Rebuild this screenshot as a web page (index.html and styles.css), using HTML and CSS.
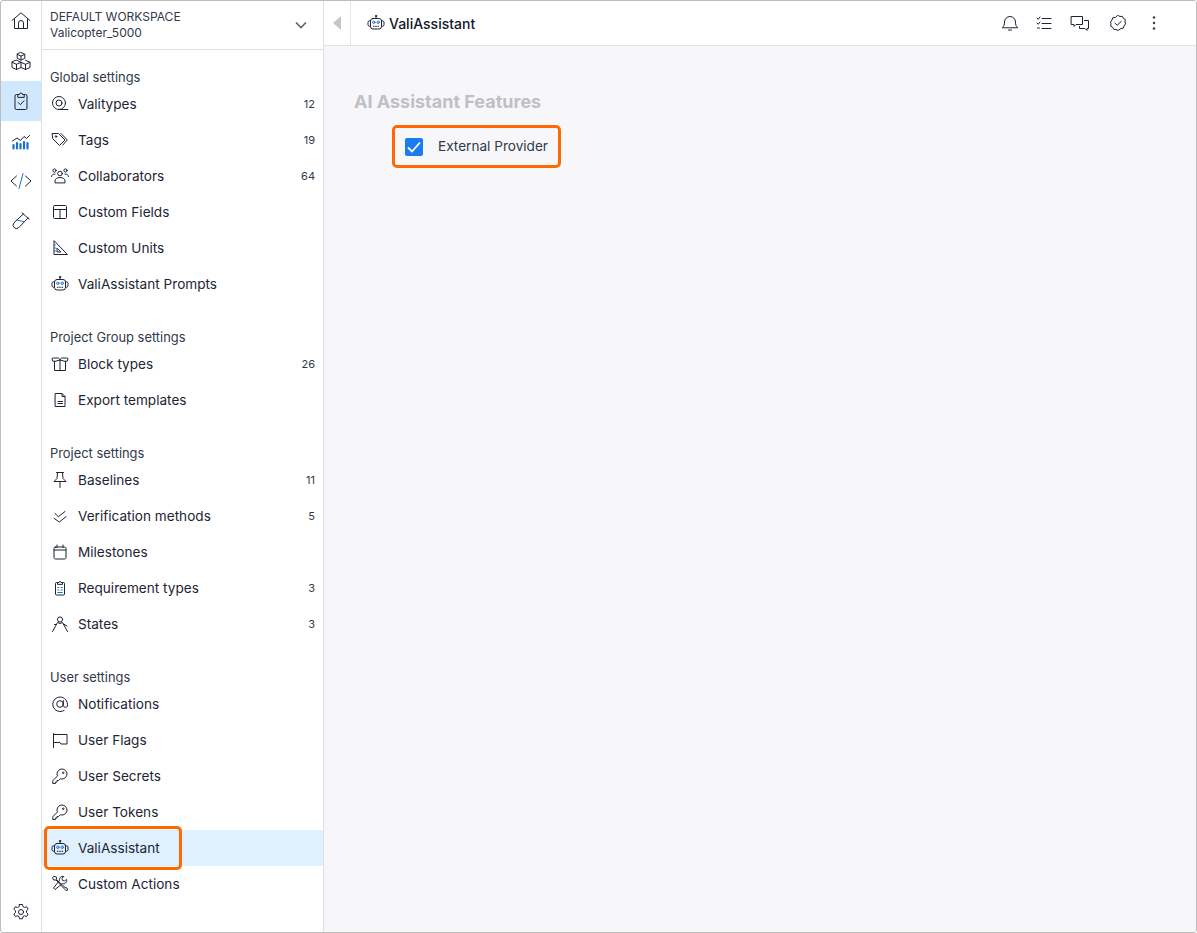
FILE: index.html
```html
<!DOCTYPE html>
<html lang="en">
<head>
<meta charset="utf-8">
<title>ValiAssistant settings</title>
<link rel="stylesheet" href="styles.css">
</head>
<body>
<svg class="defs" width="0" height="0" aria-hidden="true">
  <defs>
    <symbol id="robot" viewBox="0 0 18 18"><g fill="none" stroke="currentColor" stroke-width="1" stroke-linecap="round" stroke-linejoin="round"><rect x="3.500" y="4.500" width="11" height="10.500" rx="2.500"/><path d="M9 4.500V2.800"/><circle cx="9" cy="2" r=".7"/><path d="M3.500 6.800h-1A1.500 1.500 0 0 0 1 8.300v2.400a1.500 1.500 0 0 0 1.500 1.500h1M14.500 6.800h1A1.500 1.500 0 0 1 17 8.300v2.400a1.500 1.500 0 0 1-1.500 1.500h-1"/><circle cx="6.800" cy="8.300" r="1.200" stroke="#1c6fd0"/><circle cx="11.200" cy="8.300" r="1.200" stroke="#1c6fd0"/><path d="M6.300 12.300h.8M8.600 12.300h.8M10.900 12.300h.8"/></g></symbol>
    <symbol id="key" viewBox="0 0 16 16"><g fill="none" stroke="currentColor" stroke-width="1" stroke-linejoin="round"><path d="M10 1a5 5 0 0 1 0 10q-.8 0-1.600-.3L6.600 12.500H5v1.600H3.400v1.400H.8v-2.800l4.700-4.800Q5 7.100 5 6a5 5 0 0 1 5-5z"/><circle cx="11.200" cy="4.800" r=".8"/></g></symbol>
  </defs>
</svg>
<div class="window">
  <nav class="rail">
    <a class="rail-btn"><svg class="ic20" viewBox="0 0 20 20"><path d="M1 9.500 10 1.800l9 7.700M3.500 8v9.500h13V8M7.500 17.500v-5.500a2.500 2.500 0 0 1 5 0v5.500"/></svg></a>
    <a class="rail-btn"><svg class="ic20" viewBox="0 0 20 20"><path d="M10 1.500l3.800 1.800v4L10 9.100 6.200 7.300v-4zM6.200 3.300 10 5.100l3.800-1.800M10 5.100v4M5.500 9.200l4.500 2.100v5.200l-4.500 2L1 16.500v-5.200zM1 11.300l4.500 2 4.500-2M5.500 13.300v5.200M14.500 9.200l4.500 2.100v5.200l-4.500 2-4.500-2M10 11.300l4.500 2 4.500-2M14.500 13.300v5.200"/></svg></a>
    <a class="rail-btn rail-on"><svg class="ic20" viewBox="0 0 20 20"><path d="M6.800 3.500H5.500a1.500 1.500 0 0 0-1.500 1.500v12a1.500 1.500 0 0 0 1.500 1.500h9a1.500 1.500 0 0 0 1.500-1.500V5a1.500 1.500 0 0 0-1.500-1.500h-1.300M6.800 6V3.500h1.700a1.500 1.500 0 0 1 3 0h1.700V6zM7.200 11.500l2.200 2.200 3.600-3.900"/></svg></a>
    <a class="rail-btn"><svg class="ic20" viewBox="0 0 20 20"><path d="M1.500 10l4.500-3 3.500 2.500L13 5.500l2.500 2L18.500 4.500"/><path class="blue" d="M2.500 14v3.500M6 12v5.500M9.500 13v4.500M13 11v6.500M16.500 12v5.500" stroke-width="2.200"/></svg></a>
    <a class="rail-btn"><svg class="ic20 big" viewBox="0 0 22 20"><path d="M6.500 5 1 10l5.500 5M15.500 5 21 10l-5.500 5"/><path class="blue" d="M13 2.500 9 17.500"/></svg></a>
    <a class="rail-btn"><svg class="ic20" viewBox="0 0 20 20"><path d="M11 1.800l7.200 6.400M12.300 3 3 11.800a3.400 3.400 0 0 0 4.700 4.900L17 7"/><path class="blue" d="M6 9l7 1.800"/></svg></a>
    <div class="rail-fill"></div>
    <a class="rail-btn"><svg class="ic18" viewBox="0 0 18 18"><path d="M7.500 1.500h3l.5 2.200 1.500.8 2.100-.8 1.500 2.600-1.600 1.500v1.700l1.600 1.500-1.500 2.600-2.100-.8-1.500.8-.5 2.200h-3l-.5-2.200-1.500-.8-2.100.8-1.500-2.600 1.600-1.500V7.800L1.900 6.300l1.500-2.600 2.100.8 1.500-.8z"/><circle cx="9" cy="9" r="2.500"/></svg></a>
  </nav>

  <aside class="side">
    <header class="ws">
      <div class="ws-text"><div>DEFAULT WORKSPACE</div><div>Valicopter_5000</div></div>
      <svg class="ws-chev" viewBox="0 0 12 8"><path d="M1 1.500 6 6.500l5-5"/></svg>
    </header>

    <section class="group">
      <h3 class="group-title">Global settings</h3>
      <a class="row"><svg class="ri" viewBox="0 0 18 18"><circle cx="8" cy="8" r="6.500"/><circle cx="8" cy="8" r="3"/><path d="M8 14.500h9"/></svg><span class="row-label">Valitypes</span><span class="count">12</span></a>
      <a class="row"><svg class="ri" viewBox="0 0 18 18"><path d="M1.500 2.500h6l6.500 6.500-5.500 5.500L2 8zM10 2.500l6.300 6.500-4.500 5"/><circle cx="5" cy="5.500" r=".8"/></svg><span class="row-label">Tags</span><span class="count">19</span></a>
      <a class="row"><svg class="ri" viewBox="0 0 18 18"><circle cx="9" cy="6.500" r="2.300"/><path d="M4 15.500v-1.500c0-2 2-3.500 5-3.500s5 1.500 5 3.500v1.500z"/><circle cx="3.500" cy="3.500" r="1.600"/><circle cx="14.500" cy="3.500" r="1.600"/><path d="M.5 9.500c0-1.500 1.300-2.500 3.500-2.500M17.500 9.500c0-1.500-1.300-2.500-3.500-2.500"/></svg><span class="row-label">Collaborators</span><span class="count">64</span></a>
      <a class="row"><svg class="ri" viewBox="0 0 18 18"><rect x="2.500" y="2.500" width="13" height="13" rx="1"/><path d="M2.500 6.500h13M9 6.500v9"/></svg><span class="row-label">Custom Fields</span></a>
      <a class="row"><svg class="ri" viewBox="0 0 18 18"><path d="M3 2v13.500h13zM6 9.500v3.500h3.500z"/><path class="blue" d="M3 6h1.500M3 9h1.500M3 12h1.500"/></svg><span class="row-label">Custom Units</span></a>
      <a class="row"><svg class="ri-svg" width="18" height="18"><use href="#robot"/></svg><span class="row-label">ValiAssistant Prompts</span></a>
    </section>

    <section class="group">
      <h3 class="group-title">Project Group settings</h3>
      <a class="row"><svg class="ri" viewBox="0 0 18 18"><path d="M3.500 6v9.500h11V6M9 5v10.500M9 5 3.500 6.500 1.500 6 1 3.500 2.500 3H7zM9 5l5.500 1.500 2-.5.500-2.500-1.500-.5H11z"/></svg><span class="row-label">Block types</span><span class="count">26</span></a>
      <a class="row"><svg class="ri" viewBox="0 0 18 18"><path d="M4.500 2.500H11l3 3v10H4.500zM11 2.500v3h3M7 10.500h4.500M7 12.500h4.500"/></svg><span class="row-label">Export templates</span></a>
    </section>

    <section class="group">
      <h3 class="group-title">Project settings</h3>
      <a class="row"><svg class="ri" viewBox="0 0 18 18"><path d="M5.500 1.500h7M6.500 1.500l-.5 6-3 3h12l-3-3-.5-6M9 10.500v6"/></svg><span class="row-label">Baselines</span><span class="count">11</span></a>
      <a class="row"><svg class="ri" viewBox="0 0 18 18"><path d="M4 6.500l3.300 3.200L14 4.500M3 11.300 8.300 15 15 9.600"/></svg><span class="row-label">Verification methods</span><span class="count">5</span></a>
      <a class="row"><svg class="ri" viewBox="0 0 18 18"><rect x="3" y="4" width="12" height="12" rx="1.500"/><path d="M3 7h12M6 2v2.500M12 2v2.500"/></svg><span class="row-label">Milestones</span></a>
      <a class="row"><svg class="ri" viewBox="0 0 18 18"><path d="M6.500 3.500h-1a1 1 0 0 0-1 1V15a1 1 0 0 0 1 1h7a1 1 0 0 0 1-1V4.500a1 1 0 0 0-1-1h-1M6.500 5V3.500h1.500a1 1 0 0 1 2 0h1.500V5z"/><path class="blue" d="M6.800 8.500h1M10 8.500h1.300M6.800 11h1M10 11h1.300M6.800 13.500h4.500"/></svg><span class="row-label">Requirement types</span><span class="count">3</span></a>
      <a class="row"><svg class="ri" viewBox="0 0 18 18"><circle cx="9" cy="4.500" r="2.600"/><path d="M1.500 16.500 6.500 7.500Q9 9.500 11.500 7.500l5 9M5.500 9.500h-2M12.500 9l3.500 2"/></svg><span class="row-label">States</span><span class="count">3</span></a>
    </section>

    <section class="group">
      <h3 class="group-title">User settings</h3>
      <a class="row"><svg class="ri" viewBox="0 0 18 18"><circle cx="9" cy="9" r="3.300"/><path d="M12.300 5.500v5a2.200 2.200 0 0 0 4.200.5c.5-5-3-9-7.500-9a7 7 0 0 0 0 14.500c1.500 0 3-.4 4-1"/></svg><span class="row-label">Notifications</span></a>
      <a class="row"><svg class="ri" viewBox="0 0 18 18"><path d="M2.500 2.500v14M2.500 3.500h13.500v9.500H10L9 11.500H2.500"/></svg><span class="row-label">User Flags</span></a>
      <a class="row"><svg class="ri-svg k" width="16" height="16"><use href="#key"/></svg><span class="row-label">User Secrets</span></a>
      <a class="row"><svg class="ri-svg k" width="16" height="16"><use href="#key"/></svg><span class="row-label">User Tokens</span></a>
      <a class="row row-on"><svg class="ri-svg" width="18" height="18"><use href="#robot"/></svg><span class="row-label">ValiAssistant</span></a>
      <a class="row"><svg class="ri" viewBox="0 0 18 18"><path d="M2.500 1.500 1.500 2.500l1 2.500H5l8 8.500 2.500 2.500 1-1-.5-2-2-.5-8.500-8V2.500z"/><path d="M12.500 1.500l-1.500 2 .5 2 2 .5 2-1.500c1 3-2 5-4 4l-7.500 6-1.500-1.500 6-7.500c-.8-2 1.500-5 4-4z"/></svg><span class="row-label">Custom Actions</span></a>
    </section>
    <div class="callout callout-nav"></div>
  </aside>

  <main class="main">
    <header class="top">
      <div class="collapse"><svg class="tri" viewBox="0 0 8 14"><path d="M8 0v14L0 7z"/></svg></div>
      <div class="crumb"><svg class="ri-svg crumb-ic" width="18" height="18"><use href="#robot"/></svg><span>ValiAssistant</span></div>
      <div class="actions">
        <svg class="ta" viewBox="0 0 18 18"><path d="M1.500 13.500c1.500-1.500 2-2.500 2-5.500a5.500 5.500 0 0 1 11 0c0 3 .5 4 2 5.500zM7.500 16h3"/></svg>
        <svg class="ta" viewBox="0 0 18 18"><path d="M2 4l1.300 1.300L5 3M2 9l1.300 1.300L5 8M2.500 14h2M7 4.500h9M7 9.500h9M7 14.500h9"/></svg>
        <svg class="ta wide" viewBox="0 0 20 18"><path d="M1.500 2.500h11v8h-6.500l-2 2v-2H1.500zM14.500 6.500h4v8H17v2l-2-2H9.500v-2"/></svg>
        <svg class="ta chk" viewBox="0 0 18 18"><path d="M9 1.500l2 1 2.300-.2 1 2 2 1.200-.3 2.500.5 2-1.500 2-.7 2.200-2.300.3L9 16.500l-2-1-2.300-.2-1-2-2-1.200.3-2.500L1.500 8l1.500-2 .7-2.200L6 3.500z"/><path d="M6 9.200l2.200 2 4-3.700"/></svg>
        <svg class="ta dots" viewBox="0 0 18 18"><circle cx="9" cy="3.500" r="1.200"/><circle cx="9" cy="9" r="1.200"/><circle cx="9" cy="14.500" r="1.200"/></svg>
      </div>
    </header>
    <div class="content">
      <h2 class="title">AI Assistant Features</h2>
      <label class="opt">
        <span class="box"><svg class="tick" viewBox="0 0 18 18"><path d="M3 9.500l4 4L15 4.500"/></svg></span>
        <span class="opt-text">External Provider</span>
      </label>
    </div>
  </main>
</div>
</body>
</html>
```
FILE: styles.css
```css
* { box-sizing: border-box; }
html, body { margin: 0; height: 100%; }
body { background: #fff; font-family: Inter, "Liberation Sans", sans-serif; color: #1d2433; overflow: hidden; }
.defs { position: absolute; }
.window { display: flex; height: 933px; border: 1px solid #bdbdbd; border-radius: 3px; background: #fff; overflow: hidden; }

.ic20, .ic18, .ri, .ta { fill: none; stroke: #1d2433; stroke-width: 1; stroke-linecap: round; stroke-linejoin: round; }
.blue { stroke: #1c6fd0; }

.rail { width: 41px; flex: none; display: flex; flex-direction: column; border-right: 1px solid #e0e0e0; }
.rail-btn { height: 40px; display: flex; align-items: center; justify-content: center; flex: none; }
.rail-on { background: #cfe8fd; }
.rail-fill { flex: 1; }
.ic20 { width: 20px; height: 20px; }
.ic20.big { width: 22px; height: 20px; }
.ic18 { width: 18px; height: 18px; }

.side { position: relative; width: 282px; flex: none; border-right: 1px solid #e0e0e0; background: #fff; }
.ws { box-sizing: content-box; height: 48px; display: flex; align-items: center; justify-content: space-between; padding: 0 16px 0 8px; border-bottom: 1px solid #e0e0e0; font-size: 12px; line-height: 16px; color: #30394a; }
.ws-chev { width: 12px; height: 8px; fill: none; stroke: #666; stroke-width: 1.700; }

.group { padding-top: 18px; margin-bottom: 8px; }
.group-title { margin: 0; padding: 2px 0 0 8px; font-size: 12.900px; font-weight: 400; line-height: 16px; color: #30394a; }
.row { height: 36px; display: flex; align-items: center; font-size: 13.600px; line-height: 16px; color: #1d2433; padding: 0 8px; }
.row-on { background: #dff0fe; }
.ri, .ri-svg { width: 18px; height: 18px; flex: none; margin-left: 1px; margin-right: 9px; color: #1d2433; }
.ri-svg.k { width: 16px; height: 16px; margin-left: 2px; margin-right: 10px; }
.row-label { flex: 1; }
.count { font-size: 11px; color: #30394a; }

.callout { position: absolute; border: 3px solid #ff6a00; border-radius: 5px; pointer-events: none; }
.callout-nav { left: 2px; top: 825px; width: 138px; height: 44px; }

.main { flex: 1; min-width: 0; display: flex; flex-direction: column; background: #f7f7fa; }
.top { box-sizing: content-box; height: 44px; flex: none; display: flex; align-items: center; background: #fff; border-bottom: 1px solid #e0e0e0; }
.collapse { width: 27px; height: 44px; border-right: 1px solid #e6e6e6; display: flex; align-items: center; justify-content: center; }
.tri { width: 8px; height: 14px; fill: #c6c6c6; }
.crumb { display: flex; align-items: center; margin-left: 16px; font-size: 14px; font-weight: 500; color: #111827; }
.crumb-ic { margin: 0 4px 0 0; }
.actions { margin-left: auto; display: flex; align-items: center; gap: 16px; padding-right: 33px; }
.ta { width: 18px; height: 18px; }
.ta.wide { width: 20px; margin-left: 1px; margin-right: 3px; }
.ta.chk { margin-right: 2px; }
.ta.dots { fill: #30394a; stroke: none; }

.content { padding: 45px 30px; }
.title { margin: 0; font-size: 18px; line-height: 22px; font-weight: 700; color: #bfc0c5; }
.opt { display: flex; align-items: center; gap: 15px; margin: 12px 0 0 38px; width: 169px; height: 43px; padding-left: 10px; font-size: 13.600px; color: #30394a; border: 3px solid #ff6a00; border-radius: 5px; }
.opt-text { margin-bottom: 2px; }
.box { width: 18px; height: 18px; background: #1a7cf0; border-radius: 2px; display: flex; }
.tick { width: 18px; height: 18px; fill: none; stroke: #fff; stroke-width: 1.800; }
```
